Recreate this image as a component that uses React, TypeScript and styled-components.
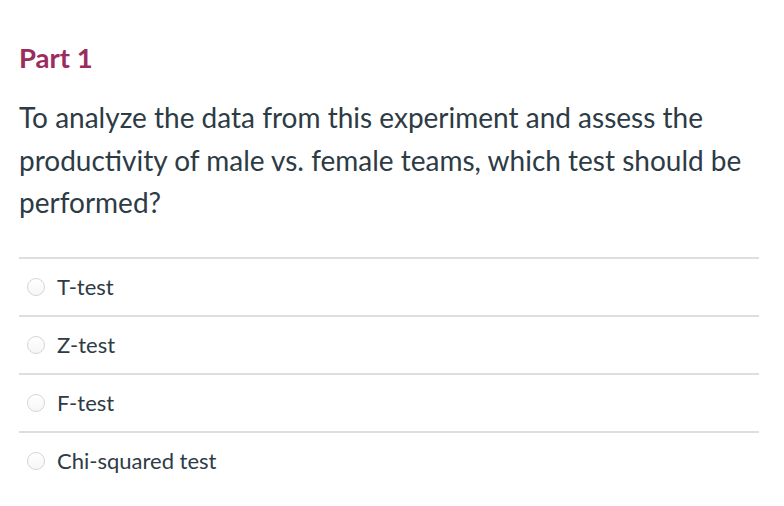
import styled, { createGlobalStyle } from 'styled-components';

const GlobalStyle = createGlobalStyle`
  html, body {
    margin: 0;
    padding: 0;
    background: #ffffff;
  }
  body {
    font-family: Lato, 'Noto Sans', sans-serif;
    color: #2d3b45;
  }
`;

const Page = styled.div`
  width: 784px;
  height: 506px;
  box-sizing: border-box;
  padding: 40px 25px 0 19px;
`;

const Title = styled.h2`
  margin: 0;
  font-size: 27.5px;
  font-weight: 700;
  line-height: 36px;
  color: #9c2b5e;
`;

const Question = styled.p`
  margin: 20px 0 0;
  font-size: 28px;
  line-height: 42.5px;
  color: #2d3b45;
`;

const Answers = styled.ul`
  list-style: none;
  margin: 33px 0 0;
  padding: 0;
`;

const Answer = styled.li`
  display: flex;
  align-items: center;
  gap: 12px;
  height: 56px;
  padding-left: 8px;
  border-top: 2px solid #dedede;
  font-size: 22px;
  color: #2d3b45;
`;

const Radio = styled.span`
  width: 18px;
  height: 18px;
  border-radius: 50%;
  border: 1px solid #d6d6d6;
  background: linear-gradient(#ffffff, #f6f6f6);
  box-sizing: border-box;
  flex: none;
`;

const options = ['T-test', 'Z-test', 'F-test', 'Chi-squared test'];

export default function App() {
  return (
    <>
      <GlobalStyle />
      <Page>
        <Title>Part 1</Title>
        <Question>
          To analyze the data from this experiment and assess the productivity of male vs. female
          teams, which test should be performed?
        </Question>
        <Answers>
          {options.map((o) => (
            <Answer key={o}>
              <Radio />
              {o}
            </Answer>
          ))}
        </Answers>
      </Page>
    </>
  );
}
